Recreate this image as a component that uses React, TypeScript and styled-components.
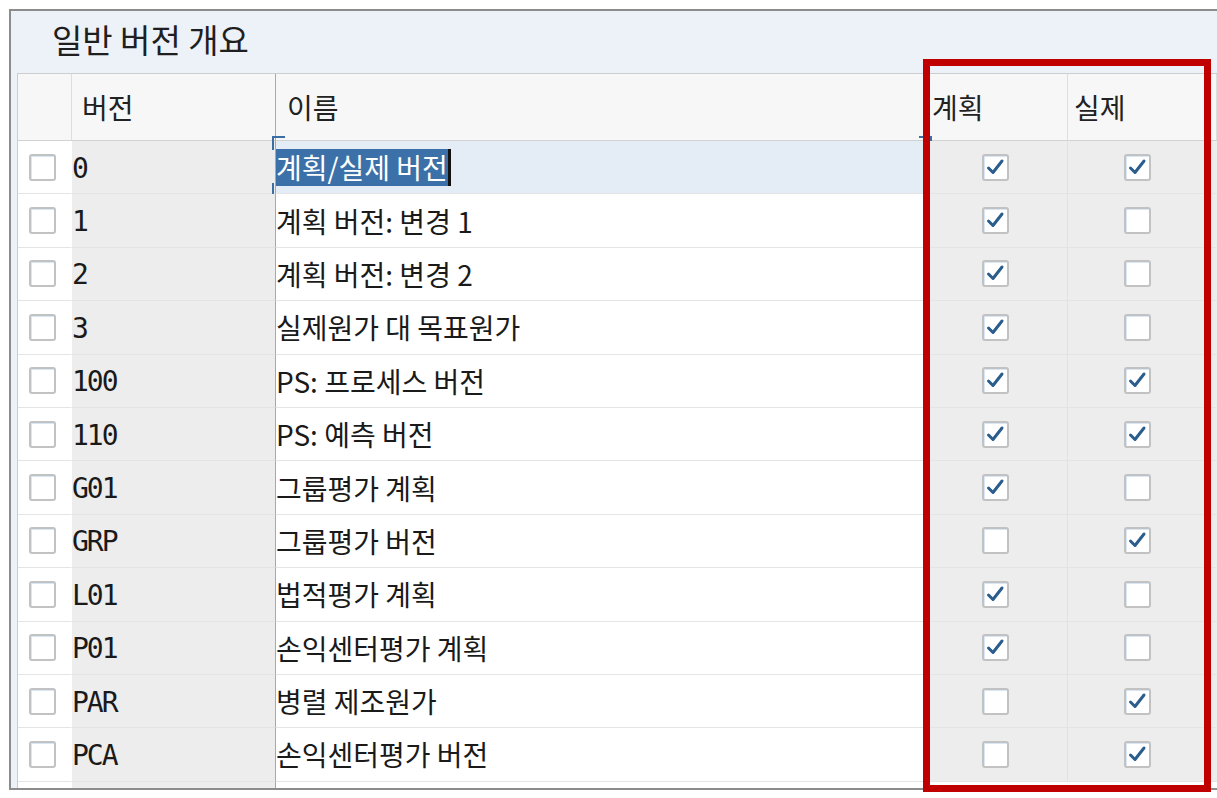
import React from "react";
import styled, { createGlobalStyle } from "styled-components";

const GlobalStyle = createGlobalStyle`
  html, body {
    margin: 0;
    padding: 0;
    background: #ffffff;
    overflow: hidden;
  }
  body {
    font-family: "Noto Sans CJK KR", "Noto Sans", sans-serif;
  }
`;

const Page = styled.div`
  position: relative;
  width: 1217px;
  height: 798px;
  padding: 9px 0 0 9px;
  box-sizing: border-box;
`;

const Panel = styled.div`
  height: 781px;
  box-sizing: border-box;
  background: #edf2f8;
  border: 2px solid #8c8c8c;
  border-right: none;
  overflow: hidden;
  padding-left: 6px;
`;

const Title = styled.div`
  height: 62px;
  display: flex;
  align-items: center;
  padding: 0 0 6px 35px;
  box-sizing: border-box;
  font-size: 33px;
  color: #1f1f1f;
`;

const Grid = styled.div`
  display: grid;
  grid-template-columns: 54px 204px 648px 144px 140px 1fr;
  border-top: 1px solid #cdcdcd;
  border-left: 1px solid #cdcdcd;
  background: #ffffff;
`;

const HeadCell = styled.div<{ $pad: number; $line?: string }>`
  height: 67px;
  box-sizing: border-box;
  background: #f7f7f7;
  border-bottom: 1px solid #d2d2d2;
  border-right: 1px solid ${(p) => p.$line || "#dedede"};
  padding-left: ${(p) => p.$pad}px;
  display: flex;
  align-items: center;
  font-size: 28px;
  color: #222;
`;

const Cell = styled.div<{ $tone?: "white" | "gray" | "edit"; $line?: string; $center?: boolean }>`
  position: relative;
  height: 53.4px;
  box-sizing: border-box;
  border-bottom: 1px solid #e4e4e4;
  border-right: 1px solid ${(p) => p.$line || "transparent"};
  background: ${(p) =>
    p.$tone === "gray" ? "#ededed" : p.$tone === "edit" ? "#e4ecf6" : "#ffffff"};
  display: flex;
  align-items: center;
  justify-content: ${(p) => (p.$center ? "center" : "flex-start")};
  font-size: 28px;
  color: #1a1a1a;
  white-space: nowrap;
`;

const SelectCell = styled(Cell)`
  padding-left: 11px;
`;

const Code = styled.span`
  font-family: "DejaVu Sans Mono", "Liberation Mono", monospace;
  font-size: 28px;
  letter-spacing: -2px;
  padding-top: 2px;
`;

const Selected = styled.span`
  background: #3b71a8;
  color: #ffffff;
  line-height: 37px;
`;

const Caret = styled.span`
  display: inline-block;
  width: 3px;
  height: 37px;
  background: #111;
`;

const EditFrame = styled.div`
  position: absolute;
  top: -5px;
  bottom: -4px;
  left: -4px;
  right: -9px;
  pointer-events: none;
`;

const Corner = styled.div<{ $v: "top" | "bottom"; $h: "left" | "right" }>`
  position: absolute;
  width: 11px;
  height: 12px;
  ${(p) => p.$v}: 0;
  ${(p) => p.$h}: 0;
  border-${(p) => p.$v}: 2px solid #3a6ea5;
  border-${(p) => p.$h}: 2px solid #3a6ea5;
`;

const Box = styled.div`
  width: 27px;
  height: 27px;
  box-sizing: border-box;
  border: 2px solid #c2c2c2;
  border-radius: 3px;
  background: #ffffff;
  box-shadow: inset 1px 1px 0 #d8e6f5;
  display: flex;
  align-items: center;
  justify-content: center;
`;

const RedFrame = styled.div`
  position: absolute;
  left: 923px;
  top: 59px;
  width: 288px;
  height: 733px;
  box-sizing: border-box;
  border: 7px solid #c00000;
  pointer-events: none;
`;

const Check: React.FC<{ checked: boolean }> = ({ checked }) => (
  <Box>
    {checked && (
      <svg width="23" height="23" viewBox="0 0 23 23">
        <path
          d="M4.5 12 L9 16.5 L18 5"
          fill="none"
          stroke="#2b5d8c"
          strokeWidth="3"
          strokeLinecap="round"
          strokeLinejoin="round"
        />
      </svg>
    )}
  </Box>
);

const rows: [string, string, boolean, boolean][] = [
  ["0", "계획/실제 버전", true, true],
  ["1", "계획 버전: 변경 1", true, false],
  ["2", "계획 버전: 변경 2", true, false],
  ["3", "실제원가 대 목표원가", true, false],
  ["100", "PS: 프로세스 버전", true, true],
  ["110", "PS: 예측 버전", true, true],
  ["G01", "그룹평가 계획", true, false],
  ["GRP", "그룹평가 버전", false, true],
  ["L01", "법적평가 계획", true, false],
  ["P01", "손익센터평가 계획", true, false],
  ["PAR", "병렬 제조원가", false, true],
  ["PCA", "손익센터평가 버전", false, true],
];

const App: React.FC = () => {
  return (
    <Page>
      <GlobalStyle />
      <Panel>
        <Title>일반 버전 개요</Title>
        <Grid>
          <HeadCell $pad={0} />
          <HeadCell $pad={10} $line="#a8a8a8">버전</HeadCell>
          <HeadCell $pad={11}>이름</HeadCell>
          <HeadCell $pad={8}>계획</HeadCell>
          <HeadCell $pad={6}>실제</HeadCell>
          <HeadCell $pad={0} />

          {rows.map(([code, name, plan, actual], i) => (
            <React.Fragment key={code}>
              <SelectCell $tone="white">
                <Check checked={false} />
              </SelectCell>
              <Cell $tone="gray" $line="#a8a8a8">
                <Code>{code}</Code>
              </Cell>
              {i === 0 ? (
                <Cell $tone="edit">
                  <Selected>{name}</Selected>
                  <Caret />
                  <EditFrame>
                    <Corner $v="top" $h="left" />
                    <Corner $v="bottom" $h="left" />
                    <Corner $v="top" $h="right" />
                    <Corner $v="bottom" $h="right" />
                  </EditFrame>
                </Cell>
              ) : (
                <Cell $tone="white">{name}</Cell>
              )}
              <Cell $tone="gray" $line="#e2e2e2" $center>
                <Check checked={plan} />
              </Cell>
              <Cell $tone="gray" $center>
                <Check checked={actual} />
              </Cell>
              <Cell $tone="gray" />
            </React.Fragment>
          ))}

          <Cell $tone="white" />
          <Cell $tone="gray" $line="#a8a8a8" />
          <Cell $tone="white" />
          <Cell $tone="white" />
          <Cell $tone="white" />
          <Cell $tone="white" />
        </Grid>
      </Panel>
      <RedFrame />
    </Page>
  );
};

export default App;
